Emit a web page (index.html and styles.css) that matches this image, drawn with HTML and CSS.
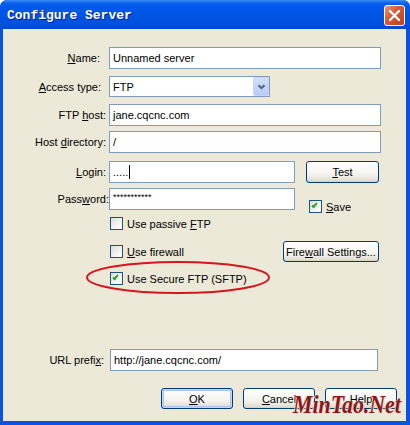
FILE: index.html
```html
<!DOCTYPE html>
<html lang="en">
<head>
  <meta charset="UTF-8">
  <title>Configure Server</title>
  <link rel="stylesheet" href="styles.css">
</head>
<body>

  <div class="window">
    <div class="titlebar">
      <span class="title">Configure Server</span>
      <span class="close">
        <svg width="13" height="13" viewBox="0 0 13 13"><path d="M2 2 L11 11 M11 2 L2 11" stroke="#fff" stroke-width="2.4" stroke-linecap="round"/></svg>
      </span>
    </div>

    <div class="frame">
      <div class="row">
        <label class="lbl lbl-name"><u>N</u>ame:</label>
        <div class="field wide">Unnamed server</div>
      </div>
      <div class="row r-access">
        <label class="lbl lbl-access"><u>A</u>ccess type:</label>
        <div class="field select">
          <span>FTP</span>
          <span class="drop">
            <svg width="9" height="6" viewBox="0 0 9 6"><path d="M1.5 1.2 L4.5 4.2 L7.5 1.2" fill="none" stroke="#4d6185" stroke-width="2"/></svg>
          </span>
        </div>
      </div>
      <div class="row r-host">
        <label class="lbl">FTP <u>h</u>ost:</label>
        <div class="field wide">jane.cqcnc.com</div>
      </div>
      <div class="row r-dir">
        <label class="lbl">Host <u>d</u>irectory:</label>
        <div class="field wide">/</div>
      </div>
      <div class="row r-login">
        <label class="lbl"><u>L</u>ogin:</label>
        <div class="field short">.....<span class="caret"></span></div>
        <button class="btn btn-test"><u>T</u>est</button>
      </div>
      <div class="row r-pass">
        <label class="lbl lbl-pass">Pass<u>w</u>ord:</label>
        <div class="field short"><span class="stars">***********</span></div>
        <div class="check save"><span class="box on"></span><span><u>S</u>ave</span></div>
      </div>

      <div class="row r-passive">
        <div class="check opt"><span class="box"></span><span>Use passive <u>F</u>TP</span></div>
      </div>
      <div class="row r-firewall">
        <div class="check opt"><span class="box"></span><span><u>U</u>se firewall</span></div>
        <button class="btn btn-fw">Fire<u>w</u>all Settings...</button>
      </div>
      <div class="row r-sftp">
        <div class="check opt"><span class="box on"></span><span>Use Secure FTP (SFTP)</span></div>
      </div>

      <div class="row r-url">
        <label class="lbl lbl-url">URL prefi<u>x</u>:</label>
        <div class="field url">http://jane.cqcnc.com/</div>
      </div>

      <div class="buttons">
        <button class="btn btn-default"><u>O</u>K</button>
        <button class="btn"><u>C</u>ancel</button>
        <button class="btn"><u>H</u>elp</button>
      </div>
    </div>

    <!-- red mark round the SFTP option -->
    <svg class="mark" width="190" height="36" viewBox="0 0 190 36">
      <ellipse cx="94" cy="17.5" rx="91" ry="15.5" fill="none" stroke="#d8141c" stroke-width="2"/>
    </svg>

    <div class="watermark">MinTao.Net</div>
  </div>

</body>
</html>
```

FILE: styles.css
```css
/* reset */
*, *::before, *::after {
  box-sizing: border-box;
}
html, body {
  margin: 0;
  padding: 0;
  background: #fff;
  font-family: "Liberation Sans", Arial, sans-serif;
  font-size: 11px;
  color: #000;
}
u {
  text-decoration: underline;
  text-underline-offset: 1px;
}

/* window frame */
.window {
  position: relative;
  width: 410px;
  height: 425px;
  display: flex;
  flex-direction: column;
  background: #0a53e0;
  border-radius: 7px 7px 0 0;
  overflow: hidden;
}
.titlebar {
  height: 29px;
  display: flex;
  align-items: flex-start;
  justify-content: space-between;
  padding: 0 5px 0 7px;
  background: linear-gradient(#3d8ef7 0, #0a62e8 3px, #0058ee 7px, #0054e3 50%, #0051dd 85%, #0047d0 100%);
}
.title {
  margin-top: 8px;
  font-family: "Liberation Mono", monospace;
  font-weight: bold;
  font-size: 13px;
  line-height: 15px;
  color: #fff;
  text-shadow: 1px 1px 0 #0a1e8a;
}
.close {
  margin-top: 5px;
  width: 21px;
  height: 21px;
  display: flex;
  align-items: center;
  justify-content: center;
  border: 1px solid #fff;
  border-radius: 3px;
  background: linear-gradient(135deg, #e99a7e 0%, #d9593a 40%, #c23d1c 100%);
}

/* dialog body */
.frame {
  flex: 1;
  margin: 0 4px 4px 3px;
  padding: 18px 0 12px 0;
  background: #ece9d8;
  display: flex;
  flex-direction: column;
}

/* form rows */
.row {
  display: flex;
  align-items: center;
}
.r-access { margin-top: 7px; }
.r-host { margin-top: 7px; }
.r-dir { margin-top: 5px; }
.r-login { margin-top: 8px; }
.r-pass { margin-top: 5px; align-items: flex-start; }
.r-passive { margin-top: 4px; }
.r-firewall { margin-top: 11px; }
.r-sftp { margin-top: 10px; }
.r-url { margin-top: auto; margin-bottom: 17px; }

.lbl {
  width: 106px;
  padding-right: 3px;
  text-align: right;
  white-space: nowrap;
}
.lbl-name { padding-right: 9px; }
.lbl-access { padding-right: 8px; }
.lbl-pass { padding-right: 0; line-height: 22px; }
.lbl-url { width: 107px; padding-right: 6px; }

/* text boxes */
.field {
  height: 22px;
  display: flex;
  align-items: center;
  padding: 0 3px;
  background: #fff;
  border: 1px solid #7f9db9;
  white-space: nowrap;
}
.wide { width: 272px; }
.short { width: 186px; }
.url { width: 268px; }
.select {
  width: 161px;
  height: 21px;
  padding-right: 0;
  justify-content: space-between;
}
.drop {
  width: 16px;
  height: 19px;
  display: flex;
  align-items: center;
  justify-content: center;
  border-radius: 2px;
  background: linear-gradient(#d3e0fd, #b6cbf8);
  border: 1px solid #c3d3fd;
}
.caret {
  display: inline-block;
  width: 1px;
  height: 14px;
  margin-left: 1px;
  background: #000;
}
.stars {
  font-size: 9px;
  position: relative;
  top: -2px;
}

/* check boxes */
.check {
  display: flex;
  align-items: center;
  gap: 4px;
}
.opt { margin-left: 107px; }
.save { margin-left: 14px; margin-top: 12px; }
.box {
  width: 13px;
  height: 13px;
  border: 1px solid #1c5180;
  background: linear-gradient(135deg, #dcdcd7 0%, #f4f4f2 60%, #fff 100%);
  position: relative;
}
.box.on::after {
  content: "";
  position: absolute;
  left: 3px;
  top: 1px;
  width: 3px;
  height: 6px;
  border: solid #21a121;
  border-width: 0 2px 2px 0;
  transform: rotate(40deg);
}

/* buttons */
.btn {
  height: 21px;
  width: 72px;
  padding: 0;
  font-family: "Liberation Sans", Arial, sans-serif;
  font-size: 11px;
  color: #000;
  border: 1px solid #003c74;
  border-radius: 3px;
  background: linear-gradient(#ffffff 0%, #f5f4ee 60%, #e3e0d5 90%, #d6d0c5 100%);
}
.btn-test {
  margin-left: 11px;
  width: 73px;
  height: 22px;
}
.btn-fw {
  margin-left: auto;
  margin-right: 27px;
  width: 96px;
}
.btn-default {
  box-shadow: inset 0 0 0 1px #c5d8fb, inset 0 0 0 2px #a9c3f5;
}
.buttons {
  display: flex;
  justify-content: flex-end;
  gap: 10px;
  padding-right: 9px;
}

/* overlays */
.mark {
  position: absolute;
  left: 84px;
  top: 260px;
}
.watermark {
  position: absolute;
  left: 293px;
  top: 392px;
  font-family: "Liberation Serif", "Times New Roman", serif;
  font-weight: bold;
  font-style: italic;
  font-size: 26px;
  line-height: 26px;
  color: #8b1818;
  text-shadow: 1px 1px 0 #f0d8cc, -1px 0 0 #f3e4dc;
  transform: scaleX(0.84);
  transform-origin: left top;
  white-space: nowrap;
}
```
